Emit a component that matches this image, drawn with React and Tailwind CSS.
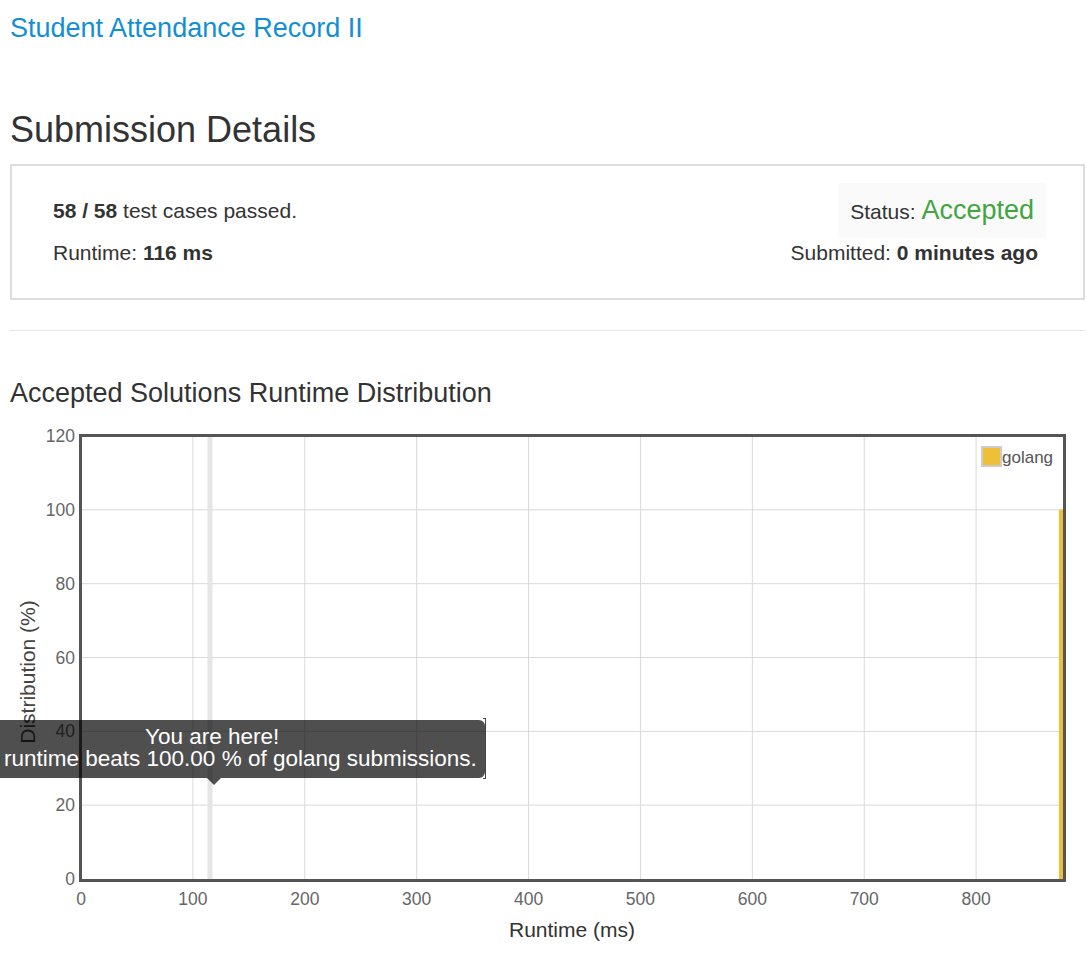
import React from "react";

const yTicks = [0, 20, 40, 60, 80, 100, 120];
const xTicks = [0, 100, 200, 300, 400, 500, 600, 700, 800];

const yPos = (v) => 879 - (v * (879 - 436)) / 120;
const xPos = (v) => 81 + v * 1.1189;

const RuntimeChart = () => {
  return (
    <div className="relative h-[538px] w-[1087px]">
      <svg width="1087" height="538" className="block">
        <g transform="translate(0,-420)" fontFamily="'Liberation Sans', Arial, sans-serif">
          {yTicks.slice(1, 6).map((v) => (
            <line key={"h" + v} x1="81" x2="1064" y1={yPos(v)} y2={yPos(v)} stroke="#d9d9d9" strokeWidth="1" />
          ))}
          {xTicks.slice(1).map((v) => (
            <line key={"v" + v} x1={xPos(v)} x2={xPos(v)} y1="436" y2="879" stroke="#d9d9d9" strokeWidth="1" />
          ))}
          <rect x="207.5" y="436" width="5" height="443" fill="#e6e6e6" />
          <rect x="1059" y="509.5" width="4" height="370" fill="#eec038" />
          <rect x="80.5" y="435.5" width="984" height="445" fill="none" stroke="#555" strokeWidth="3" />

          {yTicks.map((v) => (
            <text key={"yl" + v} x="75" y={yPos(v) + 6} textAnchor="end" fontSize="17.5" fill="#666">
              {v}
            </text>
          ))}
          {xTicks.map((v) => (
            <text key={"xl" + v} x={xPos(v)} y="905" textAnchor="middle" fontSize="17.5" fill="#666">
              {v}
            </text>
          ))}

          <rect x="982" y="447" width="19" height="19" fill="#eec038" stroke="#ccc" strokeWidth="2" />
          <text x="1002" y="462.5" fontSize="17" fill="#555">golang</text>

          <text x="572" y="937" textAnchor="middle" fontSize="21" fill="#333">Runtime (ms)</text>
          <text x="0" y="0" textAnchor="middle" fontSize="21" fill="#444" transform="translate(35,672) rotate(-90)">
            Distribution (%)
          </text>
        </g>
      </svg>

      {/* tooltip */}
      <div className="absolute left-[-10px] top-[300px] w-[495px] rounded-[6px] bg-[rgba(0,0,0,0.69)] pt-[6px] pb-[8px] text-white text-[22.5px] leading-[22px]">
        <div className="ml-[155px]">You are here!</div>
        <div className="ml-[14px] whitespace-nowrap">runtime beats 100.00 % of golang submissions.</div>
        <div className="absolute left-[217px] top-[58px] w-0 h-0 border-x-[7px] border-x-transparent border-t-[7px] border-t-[rgba(0,0,0,0.69)]"></div>
      </div>
      <div className="absolute left-[483px] top-[298px] w-[3px] h-[61px] border-r border-y border-[#444]"></div>
    </div>
  );
};

const App = () => {
  return (
    <div className="w-[1087px] bg-white text-[#333] font-['Liberation_Sans',Arial,sans-serif]">
      <div className="px-[10px] pr-[2px]">
        <div className="mt-[8px] h-[40px] leading-[40px] text-[27px] text-[#128fd3]">Student Attendance Record II</div>
        <div className="mt-[62px] h-[40px] leading-[40px] text-[36px]">Submission Details</div>

        <div className="mt-[14px] h-[136px] border-2 border-[#dddddd] flex justify-between pt-[17px]">
          <div className="pl-[41px] text-[21px]">
            <div className="h-[55px] flex items-center">
              <span className="font-bold">58 / 58</span>&nbsp;test cases passed.
            </div>
            <div className="leading-[30px]">
              Runtime: <span className="font-bold">116 ms</span>
            </div>
          </div>
          <div className="pr-[37px] flex flex-col items-end text-[21px]">
            <div className="h-[55px] px-[12px] bg-[#fafafa] flex items-center">
              <div className="flex items-baseline">
                <span>Status:&nbsp;</span>
                <span className="text-[27px] text-[#41a541]">Accepted</span>
              </div>
            </div>
            <div className="leading-[30px] pr-[8px]">
              Submitted: <span className="font-bold">0 minutes ago</span>
            </div>
          </div>
        </div>

        <div className="mt-[30px] h-px bg-[#e6e6e6]"></div>

        <div className="mt-[42px] h-[40px] leading-[40px] text-[27px]">Accepted Solutions Runtime Distribution</div>
      </div>
      <div className="mt-[7px]">
        <RuntimeChart />
      </div>
    </div>
  );
};

export default App;
